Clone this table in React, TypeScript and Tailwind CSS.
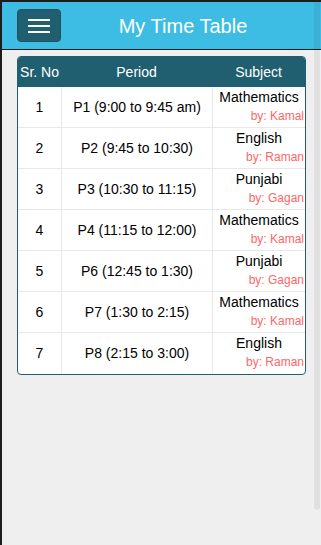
import React from "react"

interface Period {
  no: number
  period: string
  subject: string
  teacher: string
}

const periods: Period[] = [
  { no: 1, period: "P1 (9:00 to 9:45 am)", subject: "Mathematics", teacher: "Kamal" },
  { no: 2, period: "P2 (9:45 to 10:30)", subject: "English", teacher: "Raman" },
  { no: 3, period: "P3 (10:30 to 11:15)", subject: "Punjabi", teacher: "Gagan" },
  { no: 4, period: "P4 (11:15 to 12:00)", subject: "Mathematics", teacher: "Kamal" },
  { no: 5, period: "P6 (12:45 to 1:30)", subject: "Punjabi", teacher: "Gagan" },
  { no: 6, period: "P7 (1:30 to 2:15)", subject: "Mathematics", teacher: "Kamal" },
  { no: 7, period: "P8 (2:15 to 3:00)", subject: "English", teacher: "Raman" },
]

const App: React.FC = () => {
  return (
    <div className="relative h-[545px] w-[321px] overflow-hidden border-t-2 border-l-2 border-[#1c1c1c] bg-[#efefef] font-['Liberation_Sans',Arial,sans-serif]">
      {/* header */}
      <div className="flex h-[48px] items-center border-b border-[#1c1c1c] bg-[#3dbde3] pl-[15px] pr-[16px]">
        <button className="flex h-[33px] w-[44px] flex-col items-center justify-center gap-[4px] rounded-[4px] border border-[#26505b] bg-[#1f5f6f]">
          <span className="block h-[2px] w-[22px] bg-white" />
          <span className="block h-[2px] w-[22px] bg-white" />
          <span className="block h-[2px] w-[22px] bg-white" />
        </button>
        <h1 className="flex-1 text-center text-[20px] leading-none text-white">My Time Table</h1>
      </div>

      {/* table */}
      <div className="pl-[15px] pr-[15px] pt-[6px]">
        <div className="overflow-hidden rounded-[4px] border border-[#1f5f6f] bg-white text-[14px] text-black">
          <div className="grid h-[30px] grid-cols-[43px_151px_1fr] items-center bg-[#1f5f6f] text-white">
            <div className="text-center">Sr. No</div>
            <div className="text-center">Period</div>
            <div className="text-center">Subject</div>
          </div>
          {periods.map((p, i) => (
            <div
              key={p.no}
              className={
                "grid h-[41px] grid-cols-[43px_151px_1fr] " +
                (i < periods.length - 1 ? "border-b border-[#e8e8e8]" : "")
              }
            >
              <div className="flex items-center justify-center">{p.no}</div>
              <div className="flex items-center justify-center border-l border-[#e8e8e8]">{p.period}</div>
              <div className="flex flex-col border-l border-[#e8e8e8] pt-[2px]">
                <span className="text-center leading-[16px]">{p.subject}</span>
                <span className="mt-[4px] pr-[1px] text-right text-[12px] leading-[14px] text-[#ff6666]">
                  by: {p.teacher}
                </span>
              </div>
            </div>
          ))}
        </div>
      </div>

      {/* scrollbar thumb */}
      <div className="absolute right-[1px] top-0 h-[508px] w-[6px] rounded-b-full bg-black/[0.06]" />
    </div>
  )
}

export default App
